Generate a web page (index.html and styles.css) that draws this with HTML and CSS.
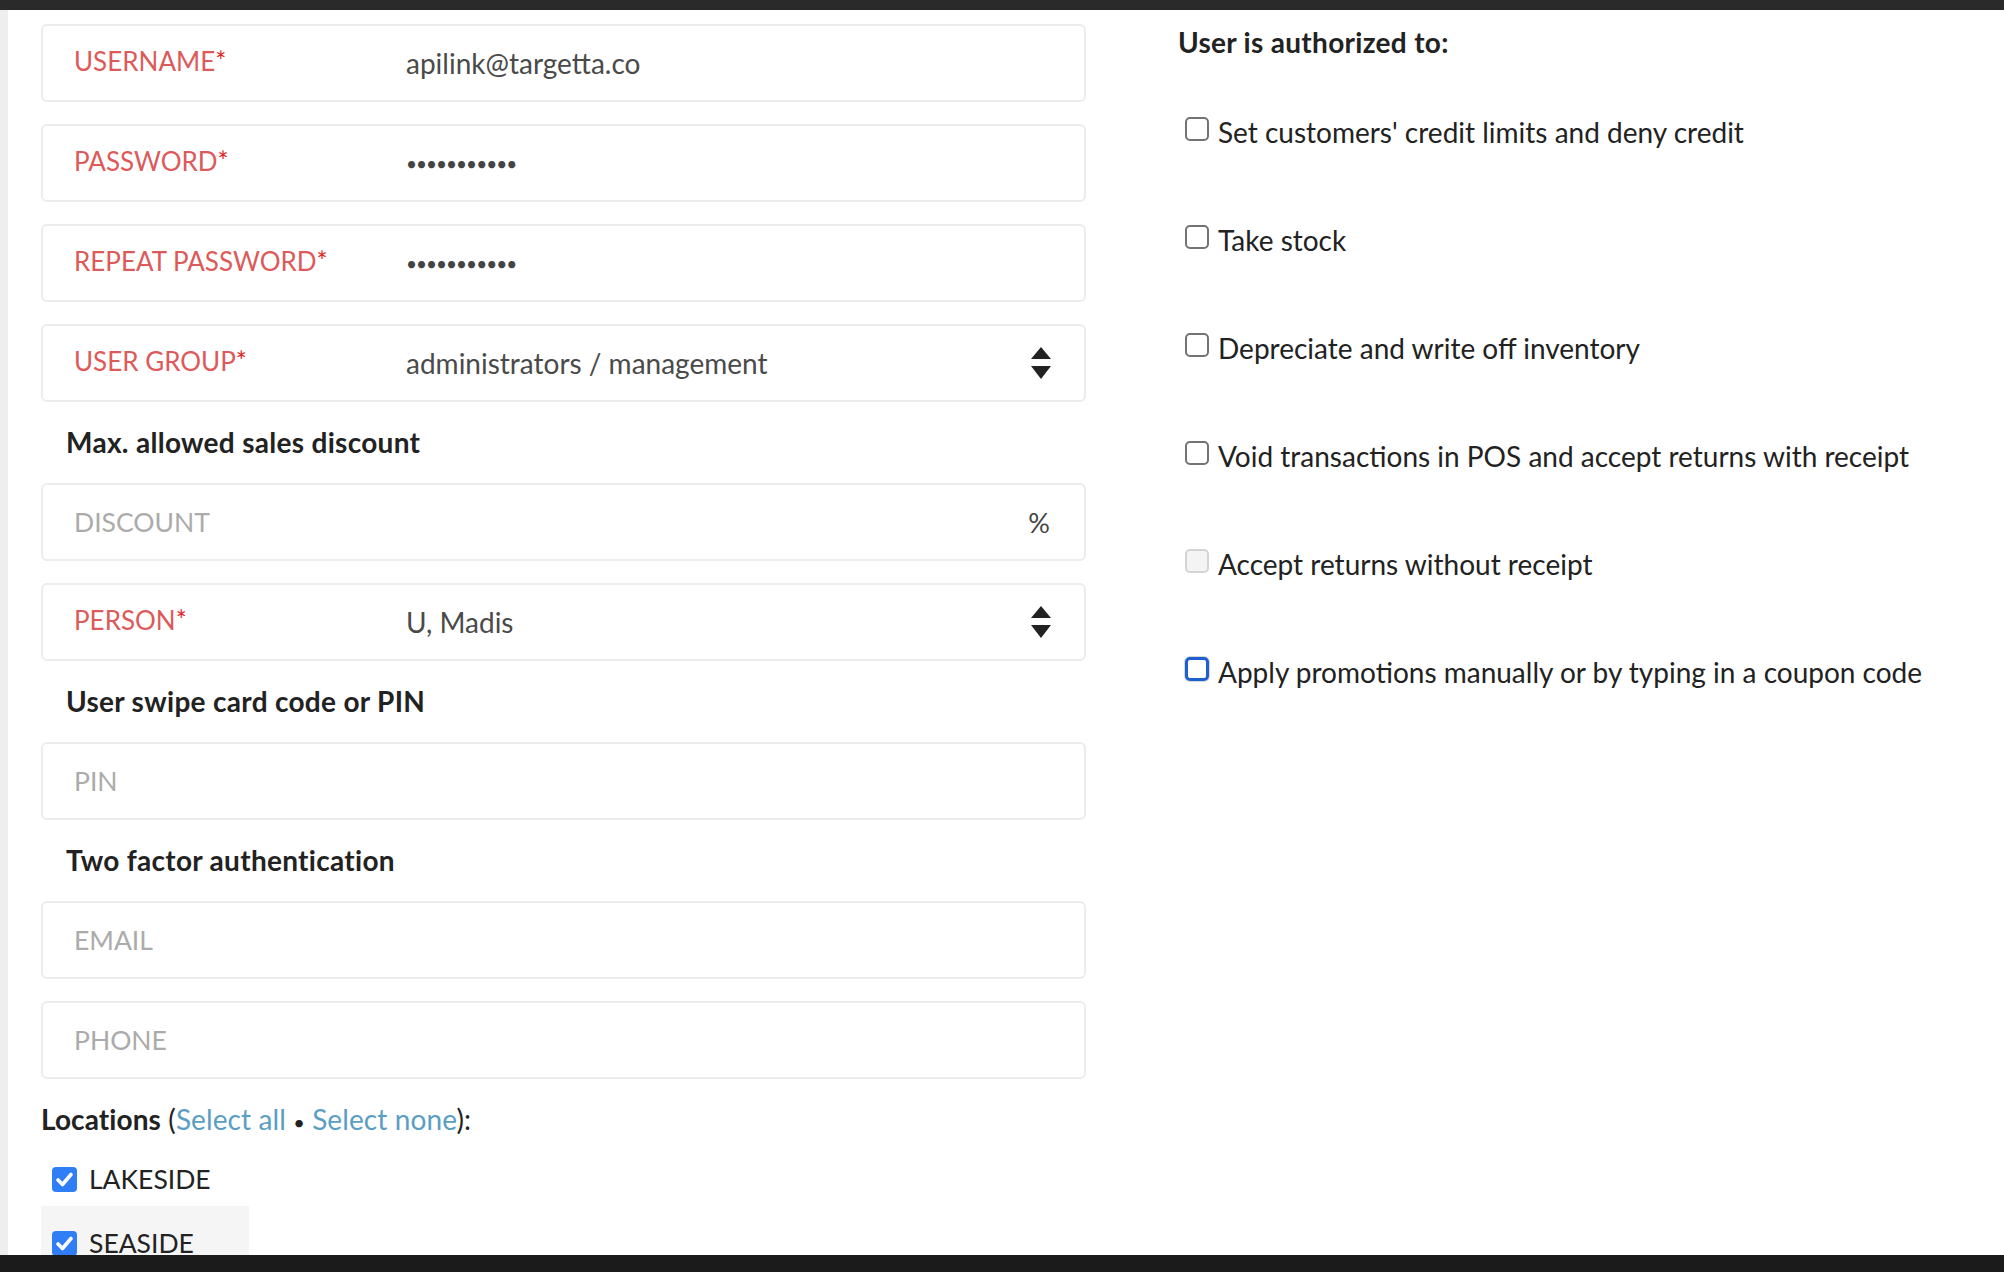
FILE: index.html
```html
<!DOCTYPE html>
<html lang="en">
<head>
<meta charset="utf-8">
<title>User</title>
<link rel="stylesheet" href="styles.css">
</head>
<body>
<div class="topbar"></div>
<div class="page">
  <div class="strip"></div>
  <main class="form">
    <div class="field"><span class="lbl">USERNAME<span class="req">*</span></span><span class="val">apilink@targetta.co</span></div>
    <div class="field"><span class="lbl">PASSWORD<span class="req">*</span></span><span class="val dots">•••••••••••</span></div>
    <div class="field"><span class="lbl">REPEAT PASSWORD<span class="req">*</span></span><span class="val dots">•••••••••••</span></div>
    <div class="field"><span class="lbl">USER GROUP<span class="req">*</span></span><span class="val">administrators / management</span>
      <svg class="arrows" width="22" height="34" viewBox="0 0 22 34"><path d="M11 1 L21 13 L1 13 Z M1 20 L21 20 L11 33 Z" fill="#222"/></svg>
    </div>
    <div class="section">Max. allowed sales discount</div>
    <div class="field"><span class="ph">DISCOUNT</span><span class="suffix">%</span></div>
    <div class="field"><span class="lbl">PERSON<span class="req">*</span></span><span class="val">U, Madis</span>
      <svg class="arrows" width="22" height="34" viewBox="0 0 22 34"><path d="M11 1 L21 13 L1 13 Z M1 20 L21 20 L11 33 Z" fill="#222"/></svg>
    </div>
    <div class="section">User swipe card code or PIN</div>
    <div class="field"><span class="ph">PIN</span></div>
    <div class="section">Two factor authentication</div>
    <div class="field"><span class="ph">EMAIL</span></div>
    <div class="field"><span class="ph">PHONE</span></div>
    <div class="locations"><b>Locations</b> (<a href="#">Select all</a> <span class="bullet">•</span> <a href="#">Select none</a>):</div>
    <div class="loc"><span class="cb checked"><svg width="25" height="25" viewBox="0 0 25 25"><path d="M6 13 L10.5 17.5 L19 7.5" fill="none" stroke="#fff" stroke-width="3.6" stroke-linecap="round" stroke-linejoin="round"/></svg></span><span>LAKESIDE</span></div>
    <div class="loc hover"><span class="cb checked"><svg width="25" height="25" viewBox="0 0 25 25"><path d="M6 13 L10.5 17.5 L19 7.5" fill="none" stroke="#fff" stroke-width="3.6" stroke-linecap="round" stroke-linejoin="round"/></svg></span><span>SEASIDE</span></div>
  </main>
  <aside class="perms">
    <div class="perms-title">User is authorized to:</div>
    <div class="perm"><span class="cb"></span><span>Set customers' credit limits and deny credit</span></div>
    <div class="perm"><span class="cb"></span><span>Take stock</span></div>
    <div class="perm"><span class="cb"></span><span>Depreciate and write off inventory</span></div>
    <div class="perm"><span class="cb"></span><span>Void transactions in POS and accept returns with receipt</span></div>
    <div class="perm"><span class="cb disabled"></span><span>Accept returns without receipt</span></div>
    <div class="perm"><span class="cb focus"></span><span>Apply promotions manually or by typing in a coupon code</span></div>
  </aside>
</div>
<div class="bottombar"></div>
</body>
</html>
```
FILE: styles.css
```css
html, body {
  margin: 0;
  padding: 0;
  height: 1272px;
  overflow: hidden;
  background: #fff;
}
body {
  display: flex;
  flex-direction: column;
  font-family: Lato, "Open Sans", Arial, sans-serif;
  font-size: 28px;
  color: #222;
}
.topbar {
  height: 10px;
  background: #2a2a2a;
  flex: none;
}
.bottombar {
  height: 17px;
  background: #1b1b1b;
  flex: none;
}
.page {
  flex: 1;
  display: flex;
  overflow: hidden;
  min-height: 0;
}
.strip {
  width: 8px;
  background: #eeeeee;
  flex: none;
}
.form {
  width: 1045px;
  margin-left: 33px;
  padding-top: 14px;
  flex: none;
  display: flex;
  flex-direction: column;
}
.field {
  box-sizing: border-box;
  height: 78px;
  border: 2px solid #ececec;
  border-radius: 6px;
  margin-bottom: 22px;
  padding: 0 32px 0 31px;
  display: flex;
  align-items: center;
  flex: none;
}
.lbl {
  width: 332px;
  flex: none;
  color: #dd5a5a;
  font-size: 26px;
  padding-bottom: 4px;
}
.req {
  color: #e02424;
}
.val {
  color: #4a4a4a;
  font-size: 28px;
  flex: 1;
}
.dots {
  font-size: 19px;
  letter-spacing: -1px;
  color: #444;
}
.ph {
  color: #ababab;
  font-size: 26.5px;
  flex: 1;
}
.suffix {
  color: #444;
  font-size: 27px;
  margin-right: 2px;
}
.arrows {
  flex: none;
  display: block;
}
.section {
  font-weight: 700;
  font-size: 28px;
  letter-spacing: 0.3px;
  line-height: 37px;
  margin: 0 0 22px 25px;
  color: #222;
}
.locations {
  line-height: 36px;
  font-size: 28px;
  letter-spacing: 0.1px;
  color: #222;
}
.locations b {
  font-weight: 700;
}
.locations a {
  color: #5b9ec4;
  text-decoration: none;
}
.bullet {
  font-size: 20px;
}
.loc {
  display: flex;
  align-items: center;
  gap: 12px;
  height: 64px;
  padding-left: 11px;
  padding-top: 10px;
  width: 208px;
  box-sizing: border-box;
  color: #222;
  font-size: 26.5px;
  margin-top: 2px;
  flex: none;
}
.loc + .loc {
  margin-top: 0;
}
.loc.hover {
  background: #f5f5f5;
}
.cb {
  box-sizing: border-box;
  width: 24px;
  height: 24px;
  border: 2px solid #737373;
  border-radius: 5px;
  flex: none;
  display: block;
  background: #fff;
}
.cb.checked {
  width: 25px;
  height: 25px;
  border: none;
  background: #2f7ef6;
  border-radius: 4px;
}
.cb.checked svg {
  display: block;
}
.cb.disabled {
  border-color: #d4d4d4;
  background: #f4f4f4;
}
.cb.focus {
  border: 3px solid #1f5fcf;
  box-shadow: 0 0 0 1px #d8d8d8;
}
.perms {
  margin-left: 92px;
  padding-top: 14px;
  display: flex;
  flex-direction: column;
  gap: 72px;
}
.perms-title {
  font-weight: 700;
  font-size: 28px;
  letter-spacing: 0.3px;
  line-height: 36px;
  margin-bottom: -18px;
}
.perm {
  display: flex;
  align-items: center;
  gap: 9px;
  line-height: 36px;
  padding-left: 7px;
  color: #222;
}
.perm .cb {
  margin-top: -6px;
}
```
